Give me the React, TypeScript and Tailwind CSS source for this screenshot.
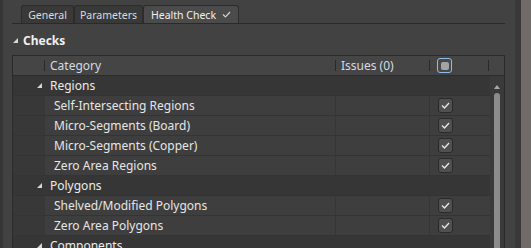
import React from 'react';

type Row =
  | { kind: 'group'; label: string }
  | { kind: 'item'; label: string; checked: boolean };

const rows: Row[] = [
  { kind: 'group', label: 'Regions' },
  { kind: 'item', label: 'Self-Intersecting Regions', checked: true },
  { kind: 'item', label: 'Micro-Segments (Board)', checked: true },
  { kind: 'item', label: 'Micro-Segments (Copper)', checked: true },
  { kind: 'item', label: 'Zero Area Regions', checked: true },
  { kind: 'group', label: 'Polygons' },
  { kind: 'item', label: 'Shelved/Modified Polygons', checked: true },
  { kind: 'item', label: 'Zero Area Polygons', checked: true },
  { kind: 'group', label: 'Components' },
];

const Expander = ({ color = '#d8d8d8' }: { color?: string }) => (
  <svg width="5" height="5" viewBox="0 0 5 5" className="shrink-0">
    <polygon points="5,0 5,5 0,5" fill={color} />
  </svg>
);

const CheckBox = () => (
  <div className="w-[15px] h-[15px] rounded-[3px] border border-[#2a2a2a] bg-[#505050] flex items-center justify-center">
    <svg width="9" height="7" viewBox="0 0 9 7">
      <path d="M1 3.5 L3.5 6 L8 1" stroke="#e8e8e8" strokeWidth="1.3" fill="none" />
    </svg>
  </div>
);

const Tab = ({ label, width, active, check }: { label: string; width: string; active?: boolean; check?: boolean }) => (
  <div
    className={`${width} h-[18px] flex items-center justify-center gap-[6px] rounded-t-[3px] border border-b-0 border-[#2c2c2c] text-[10.5px] leading-none ${
      active ? 'bg-[#4b4b4b] text-[#f0f0f0]' : 'bg-[#393939] text-[#dcdcdc]'
    }`}
  >
    <span className="pt-[1px] whitespace-nowrap">{label}</span>
    {check && (
      <svg width="9" height="7" viewBox="0 0 9 7">
        <path d="M1 3.5 L3.5 6 L8 1" stroke="#d0d0d0" strokeWidth="1.2" fill="none" />
      </svg>
    )}
  </div>
);

export default function App() {
  return (
    <div
      className="w-[531px] h-[248px] flex bg-[#424242] overflow-hidden text-[#e2e2e2]"
      style={{ fontFamily: '"Noto Sans", "Open Sans", sans-serif' }}
    >
      <div className="w-[3px] bg-[#363636] shrink-0" />
      <div className="flex-1 flex flex-col pl-[9px] pr-[10px]">
        {/* Tabs */}
        <div className="pt-[5px] border-b border-[#2a2a2a]">
          <div className="flex pl-[9px]">
            <Tab label="General" width="w-[53px]" />
            <Tab label="Parameters" width="w-[69px]" />
            <Tab label="Health Check" width="w-[96px]" active check />
          </div>
        </div>

        {/* Checks header */}
        <div className="h-[31px] flex items-center gap-[5px] pl-[1px] pt-[2px]">
          <Expander />
          <span className="text-[12px] font-bold text-[#f0f0f0]">Checks</span>
        </div>

        {/* Table */}
        <div className="flex-1 border border-[#2b2b2b] border-b-0 flex flex-col min-h-0">
          <div className="h-[20px] shrink-0 flex items-center bg-[#454545] border-b border-[#2b2b2b] text-[12px] text-[#d4dbe2]">
            <div className="w-[32px] h-[11px] border-r border-[#2a2a2a]" />
            <div className="w-[291px] h-[11px] border-r border-[#2a2a2a] pl-[5px] flex items-center pt-[1px]">Category</div>
            <div className="w-[94px] h-[11px] border-r border-[#2a2a2a] pl-[5px] flex items-center pt-[1px]">Issues (0)</div>
            <div className="w-[59px] h-[11px] border-r border-[#2a2a2a] pl-[7px] flex items-center">
              <div className="w-[15px] h-[15px] rounded-[3px] border border-[#8fbbe8] bg-[#484848] flex items-center justify-center">
                <div className="w-[8px] h-[8px] rounded-[2px] bg-[#a3a3a3]" />
              </div>
            </div>
          </div>

          <div className="flex flex-1 min-h-0">
            <div className="w-[477px] flex flex-col">
              {rows.map((r, i) =>
                r.kind === 'group' ? (
                  <div
                    key={i}
                    className="h-[20px] shrink-0 flex items-center bg-[#363636] border-b border-[#333] text-[12px] text-[#ececec] pl-[24px] gap-[8px]"
                  >
                    <Expander />
                    <span className="pt-[1px]">{r.label}</span>
                  </div>
                ) : (
                  <div key={i} className="h-[20px] shrink-0 flex bg-[#3e3e3e] border-b border-[#343434] text-[12px] text-[#e6e6e6]">
                    <div className="w-[32px] bg-[#383838]" />
                    <div className="w-[291px] border-r border-[#363636] pl-[9px] flex items-center pt-[1px]">{r.label}</div>
                    <div className="w-[94px] border-r border-[#363636]" />
                    <div className="w-[59px] pl-[8px] flex items-center">{r.checked && <CheckBox />}</div>
                  </div>
                )
              )}
            </div>
            {/* Scrollbar */}
            <div className="flex-1 bg-[#3a3a3a] flex flex-col items-center pt-[9px]">
              <svg width="6" height="4" viewBox="0 0 6 4">
                <polygon points="3,0 6,4 0,4" fill="#a8a8a8" />
              </svg>
              <div className="mt-[4px] w-[6px] flex-1 rounded-t-[3px] bg-[#8c8c8c]" />
            </div>
          </div>
        </div>
      </div>
      <div className="w-[6px] bg-[#393939] shrink-0" />
      <div className="w-[10px] bg-[#706b69] shrink-0" />
    </div>
  );
}
